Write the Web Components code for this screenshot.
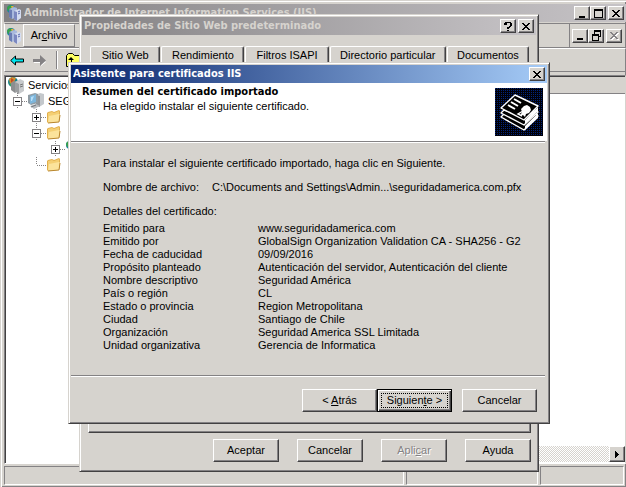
<!DOCTYPE html>
<html lang="es">
<head>
<meta charset="utf-8">
<title>Administrador de Internet Information Services (IIS)</title>
<style>
html, body { height: 100%; margin: 0; }
body {
  --face: #d6d3ce; --dark: #848284; --black: #424142; --light: #fff;
  font: 11px/13px "Liberation Sans", Arial, sans-serif;
  color: #000; position: relative; overflow: hidden; background: #d6d3ce;
}
</style>
</head>
<body>
<mmc-window></mmc-window>
<properties-dialog></properties-dialog>
<wizard-dialog></wizard-dialog>

<script>
const define = (name, html) => {
  const t = document.createElement('template');
  t.innerHTML = html;
  customElements.define(name, class extends HTMLElement {
    constructor() {
      super();
      this.attachShadow({ mode: 'open' }).append(t.content.cloneNode(true));
    }
  });
};

/* Raised outer frame of a window or dialog */
define('win-frame', `
<style>
:host { display: flex; flex-direction: column; min-width: 0; box-sizing: border-box; background: var(--face);
  border: 1px solid; border-color: var(--face) var(--black) var(--black) var(--face);
  box-shadow: inset 1px 1px var(--light), inset -1px -1px var(--dark); padding: 2px; }
</style><slot></slot>`);

define('title-bar', `
<style>
:host { display: flex; align-items: center; height: 18px; flex: none; gap: 2px; padding: 0 2px;
  background: linear-gradient(90deg, #848284, #c6c3c6); color: #d6d3ce; box-sizing: border-box; }
:host([active]) { background: linear-gradient(90deg, #08246b, #a5cbf7); color: #fff; }
h1 { flex: 1; margin: 0; font: bold 11px/16px "DejaVu Sans Condensed", Tahoma, sans-serif; white-space: nowrap; overflow: hidden; }
.tools { display: flex; }
</style>
<slot name="icon"></slot><h1><slot></slot></h1><div class="tools"><slot name="tools"></slot></div>`);

/* Small caption buttons: kind = min | max | restore | help | close */
const glyphs = {
  min: '<path d="M3 8h6v2H3z"/>',
  max: '<path d="M2 1h9v9H2zM3 3v6h7V3z" fill-rule="evenodd"/>',
  restore: '<path d="M4 0h7v7H9v4H2V4h2zM5 2v2h4v2h1V2zM3 6v4h5V6z" fill-rule="evenodd"/>',
  help: '<path d="M3 1h6v1H3zM2 2h3v2H2zM8 2h2v3H8zM7 5h2v1H7zM5 6h3v1H5zM5 7h2v1H5zM5 9h2v1H5z"/>',
  close: '<path d="M2 2h2v1h1v1h2V3h1V2h2v1H9v1H8v1H7v1h1v1h1v1h1v1H8V8H7V7H5v1H4v1H2V8h1V7h1V6h1V5H4V4H3V3H2z"/>'
};
customElements.define('caption-button', class extends HTMLElement {
  connectedCallback() {
    const off = this.hasAttribute('disabled');
    const g = glyphs[this.getAttribute('kind')];
    this.attachShadow({ mode: 'open' }).innerHTML = `
<style>
:host { display: block; }
button { display: block; width: 16px; height: 14px; padding: 0 0 0 1px; background: var(--face); border: 1px solid;
  border-color: var(--light) var(--black) var(--black) var(--light); box-shadow: inset -1px -1px var(--dark); }
svg { display: block; overflow: visible; }
</style>
<button type="button" aria-label="${this.getAttribute('label')}" ${off ? 'disabled' : ''}>
<svg width="12" height="11" viewBox="0 0 12 11" shape-rendering="crispEdges">${off ? `<g fill="#fff" transform="translate(1 1)">${g}</g><g fill="#848284">${g}</g>` : g}</svg></button>`;
  }
});

define('push-button', `
<style>
:host { display: block; width: 66px; }
button { display: block; width: 100%; height: 23px; padding: 0 0 1px; font: inherit; color: #000; background: var(--face); border: 1px solid;
  border-color: var(--light) var(--black) var(--black) var(--light); box-shadow: inset -1px -1px var(--dark); }
:host([default]) button { border: 1px solid #000; padding: 2px 3px 3px;
  box-shadow: inset 1px 1px var(--light), inset -1px -1px var(--black), inset -2px -2px var(--dark); }
:host([default]) span { display: block; border: 1px dotted #000; line-height: 13px; }
:host([disabled]) button { color: #848284; text-shadow: 1px 1px #fff; }
</style><button type="button"><span><slot></slot></span></button>`);

/* Server computer with a globe behind it */
define('server-icon', `
<style>:host { display: block; flex: none; width: 16px; height: 16px; } svg { display: block; }</style>
<svg width="16" height="16" viewBox="0 0 16 16">
<circle cx="5" cy="4" r="4" fill="#1c7fa8"/><path d="M2 1l3-1 2 2-2 3-3 1-1-3z" fill="#38a04a"/><path d="M5 1l3 0-2 3z" fill="#e8b23c"/>
<path d="M3 4l5-2 3 1v9l-5 2-3-2z" fill="#a9b9dd"/><path d="M3 4l3 1v9l-3-2z" fill="#6a7cb4"/>
<path d="M8 6l5-2 2 1v8l-4 3-3-2z" fill="#d4dcf0"/><path d="M8 6l3 1v9l-3-2z" fill="#7c88c0"/><path d="M12 7l2-1M12 9l2-1" stroke="#5a6ab0"/>
</svg>`);

define('iis-icon', `
<style>:host { display: block; flex: none; width: 16px; height: 17px; } svg { display: block; }</style>
<svg width="16" height="17" viewBox="0 0 16 17">
<circle cx="5" cy="5" r="5" fill="#16828c"/><path d="M1 2l3-2 4 1-2 4-4 2z" fill="#d8902c"/><path d="M3 1l3 2-3 3z" fill="#c04a28"/><path d="M1 6l3 1-1 3z" fill="#3ca860"/>
<path d="M3 6l3-2 4 1v9l-3 2-4-3z" fill="#8c8e90"/>
<path d="M7 5l5-3 4 2v10l-5 3-4-3z" fill="#c8cacc"/><path d="M7 5l4 2v10l-4-3z" fill="#9c9ea0"/><path d="M12 8l3-1M12 10l3-1" stroke="#777"/>
</svg>`);

define('computer-icon', `
<style>:host { display: block; flex: none; width: 17px; height: 16px; } svg { display: block; }</style>
<svg width="17" height="16" viewBox="0 0 17 16">
<path d="M9 2l4-2 4 1v10l-5 3-3-2z" fill="#c4c8cc"/><path d="M9 2l4 1v11l-4-2z" fill="#909498"/>
<path d="M1 2l7-2 3 1v9l-7 2-3-2z" fill="#8f9ba3"/><path d="M3 3l6-2v8l-6 2z" fill="#7db6dc"/><path d="M4 4l3-1-2 5-1 0z" fill="#b6def8"/>
<path d="M3 13l6-2 4 2-6 3z" fill="#b8bcc0"/><path d="M4 14l5-2" stroke="#71767c"/>
</svg>`);

define('folder-icon', `
<style>:host { display: block; flex: none; width: 15px; height: 14px; } svg { display: block; }</style>
<svg width="15" height="14" viewBox="0 0 15 14">
<path d="M1 3l1-1 4-1 2 1 5-2 1 1v9l-2 2-10 1-1-1z" fill="#e2b04c"/>
<path d="M2 3l4-1 2 1 5-2v8l-11 3z" fill="#f4cf73"/><path d="M3 6l10-2 1 1-1 7-11 1z" fill="#fbe39b"/><path d="M2 13l11-1 1-7" fill="none" stroke="#b98730"/>
</svg>`);

define('certificate-icon', `
<style>:host { display: block; flex: none; width: 48px; height: 48px; } svg { display: block; }</style>
<svg width="48" height="48" viewBox="0 0 48 48">
<defs><pattern id="p" width="2" height="2" patternUnits="userSpaceOnUse"><path d="M0 0h1v1H0z" fill="#00247b"/></pattern></defs>
<path d="M0 0h48v48H0z" fill="#000008"/><path d="M0 0h48v48H0z" fill="url(#p)" shape-rendering="crispEdges"/>
<g fill="#000" stroke="#fff" stroke-width="1.4" stroke-linejoin="round">
<path d="M6 29l3-3 21 8 11-8 2 2-14 14z"/><path d="M6 25l3-3 21 8 11-8 2 2-14 13z"/>
<path d="M20 7L43 18 29 32 6 20z"/></g>
<path d="M43 19v4L30 36v-4zM43 25v5L30 42v-4z" fill="#fff"/>
<path d="M19 11l7 4M16 14l7 4M13 17l7 4" stroke="#fff" stroke-width="2"/>
<path d="M29 18l3-1 3 2 1 3-2 3-3 1-1 3-2-2-3 1 2-4-1-3z" fill="#fff"/>
<path d="M27 28l-4-2 5-3" fill="none" stroke="#fff" stroke-width="1.4"/>
</svg>`);

/* One row of the console tree; --indent is the space before its expander */
customElements.define('tree-row', class extends HTMLElement {
  connectedCallback() {
    const s = this.getAttribute('state');
    this.attachShadow({ mode: 'open' }).innerHTML = `
<style>
:host { display: flex; align-items: center; height: 16px; gap: 4px; white-space: nowrap; padding-left: var(--indent, 2px); }
.node { width: 14px; height: 16px; margin-right: -4px; }
.node svg { display: block; }
</style>
${s ? `<span class="node"><svg width="14" height="16" shape-rendering="crispEdges">
<path d="M4.500 0v${s === 'leaf' ? 8 : 16}" stroke="#848284" stroke-dasharray="1 1"/><path d="M5 8.500h9" stroke="#848284" stroke-dasharray="1 1"/>
${s === 'leaf' ? '' : `<path d="M.5 4.500h8v8h-8z" fill="#fff" stroke="#848284"/><path d="M2 8h5v1H2z${s === 'plus' ? 'M4 6h1v5H4z' : ''}"/>`}
</svg></span>` : ''}<slot name="icon"></slot><slot></slot>`;
  }
});

define('mmc-window', `
<style>
:host { display: block; height: 100%; }
win-frame { height: 100%; padding: 3px 0 2px 3px; border-width: 1px 0 0 1px; }
.bar { display: flex; align-items: center; box-sizing: border-box; flex: none; background: var(--face);
  border: 1px solid; border-color: var(--light) var(--dark) var(--dark) var(--light); }
.menu { height: 25px; margin-top: 1px; border-top-color: var(--dark); }
.menu server-icon { margin: 0 1px; }
.menu button { align-self: stretch; width: 52px; padding: 0; border: 1px solid; font: inherit; background: var(--face);
  border-color: var(--light) var(--dark) var(--dark) var(--light); }
.grow { flex: 1; }
.mdi { display: flex; align-self: stretch; align-items: center; padding: 0 3px 0 2px; border-left: 1px solid var(--dark); }
.mdi caption-button:last-child { margin-left: 2px; }
.tools { height: 24px; gap: 9px; padding-left: 5px; }
.tools button { display: block; border: 0; padding: 0; background: none; }
.tools svg { display: block; }
.sep { width: 1px; height: 18px; background: var(--dark); box-shadow: 1px 0 var(--light); }
.panes { flex: 1; display: flex; min-height: 0; margin-top: 3px; gap: 3px; }
.pane { background: #fff; border: 1px solid; border-color: var(--dark) var(--face) var(--light) var(--dark);
  box-shadow: inset 1px 1px var(--black); box-sizing: border-box; padding: 1px; min-width: 0; overflow: hidden; }
.tree { width: 180px; flex: none; }
.list { flex: 1; display: flex; flex-direction: column; padding: 1px 0 1px 1px; }
.head { height: 16px; background: var(--face); border-bottom: 1px solid var(--dark); }
.scroll { display: flex; justify-content: flex-end; margin-top: auto; height: 16px;
  background: repeating-conic-gradient(#fff 0 25%, var(--face) 0 50%) 0 0 / 2px 2px; }
.scroll button { width: 16px; height: 16px; padding: 0; background: var(--face); border: 1px solid;
  border-color: var(--light) var(--black) var(--black) var(--light); box-shadow: inset -1px -1px var(--dark); }
.scroll svg { display: block; margin: auto; }
.status { display: flex; gap: 2px; height: 19px; flex: none; margin: 2px 2px 0 0; }
.status div { box-sizing: border-box; border: 1px solid; border-color: var(--dark) var(--light) var(--light) var(--dark); }
.status div:nth-child(1) { flex: 402; } .status div:nth-child(2) { flex: 131; } .status div:nth-child(3) { flex: 83; }
.l1 { --indent: 7px; } .l2 { --indent: 26px; } .l3 { --indent: 45px; }
</style>
<win-frame>
  <title-bar><server-icon slot="icon"></server-icon>Administrador de Internet Information Services (IIS)
    <caption-button slot="tools" kind="min" label="Minimizar"></caption-button>
    <caption-button slot="tools" kind="max" label="Maximizar"></caption-button>
    <caption-button slot="tools" kind="close" label="Cerrar" style="margin-left:2px"></caption-button>
  </title-bar>
  <div class="bar menu"><server-icon></server-icon><button type="button">Ar<u>c</u>hivo</button><span class="grow"></span>
    <div class="mdi"><caption-button kind="min" label="Minimizar ventana"></caption-button><caption-button kind="restore" label="Restaurar ventana"></caption-button><caption-button kind="close" label="Cerrar ventana" disabled></caption-button></div>
  </div>
  <div class="bar tools">
    <button type="button" aria-label="Atrás"><svg width="14" height="11"><path d="M.7 5.500L5.500 1v3h8v3h-8v3z" fill="#00e8f0" stroke="#000"/></svg></button>
    <button type="button" aria-label="Adelante"><svg width="14" height="11"><path d="M1 5h7V2l5 5-5 4V8H1z" fill="#fff"/><path d="M0 4h7V0l6 5.500L7 11V7H0z" fill="#848284"/></svg></button>
    <span class="sep"></span>
    <button type="button" aria-label="Subir un nivel"><svg width="16" height="14"><path d="M.5 13.500v-11l2-2h4l2 2h7v11z" fill="#ffff63" stroke="#000"/><path d="M5 4l3 3H6v3h5v1H5V7H2z"/></svg></button>
  </div>
  <div class="panes">
    <div class="pane tree" role="tree">
      <tree-row><iis-icon slot="icon"></iis-icon>Servicios</tree-row>
      <tree-row class="l1" state="minus"><computer-icon slot="icon"></computer-icon>SEG</tree-row>
      <tree-row class="l2" state="plus"><folder-icon slot="icon"></folder-icon></tree-row>
      <tree-row class="l2" state="minus"><folder-icon slot="icon"></folder-icon></tree-row>
      <tree-row class="l3" state="plus"><server-icon slot="icon"></server-icon></tree-row>
      <tree-row class="l2" state="leaf"><folder-icon slot="icon"></folder-icon></tree-row>
    </div>
    <div class="pane list"><div class="head"></div>
      <div class="scroll"><button type="button" aria-label="Desplazar a la derecha"><svg width="4" height="7" shape-rendering="crispEdges"><path d="M0 0h1v1h1v1h1v1h1v1H3v1H2v1H1v1H0z"/></svg></button></div>
    </div>
  </div>
  <div class="status"><div></div><div></div><div></div></div>
</win-frame>`);

define('properties-dialog', `
<style>
:host { position: absolute; left: 79px; top: 14px; right: 87px; }
.body { display: flex; flex-direction: column; padding: 11px 5px 7px 6px; }
.tabs { display: flex; gap: 1px; padding: 0 2px; }
.tabs button { height: 18px; padding: 0; font: inherit; background: var(--face); border: 1px solid; border-bottom: 0;
  border-color: var(--light) var(--black) var(--light) var(--light); border-radius: 2px 2px 0 0; box-shadow: inset -1px 0 var(--dark); }
.tabs button:nth-child(1) { flex: 70 0 0; } .tabs button:nth-child(2) { flex: 83 0 0; } .tabs button:nth-child(3) { flex: 83 0 0; }
.tabs button:nth-child(4) { flex: 117 0 0; } .tabs button:nth-child(5) { flex: 82 0 0; }
.page { height: 369px; border: 1px solid; border-color: var(--light) var(--black) var(--black) var(--light); box-shadow: inset -1px -1px var(--dark); box-sizing: border-box; }
.buttons { display: flex; justify-content: flex-end; gap: 18px; margin-top: 6px; }
</style>
<win-frame>
  <title-bar>Propiedades de Sitio Web predeterminado
    <caption-button slot="tools" kind="help" label="Ayuda"></caption-button>
    <caption-button slot="tools" kind="close" label="Cerrar" style="margin-left:2px"></caption-button>
  </title-bar>
  <div class="body">
    <div class="tabs" role="tablist"><button role="tab">Sitio Web</button><button role="tab">Rendimiento</button><button role="tab">Filtros ISAPI</button><button role="tab">Directorio particular</button><button role="tab">Documentos</button></div>
    <div class="page"></div>
    <div class="buttons"><push-button>Aceptar</push-button><push-button>Cancelar</push-button><push-button disabled>Apli<u>c</u>ar</push-button><push-button>Ayuda</push-button></div>
  </div>
</win-frame>`);

define('wizard-dialog', `
<style>
:host { position: absolute; left: 68px; top: 62px; right: 76px; }
header { display: flex; justify-content: space-between; align-items: flex-start; background: #fff; height: 58px; box-sizing: border-box; padding: 1px 4px 0 11px; }
h2 { margin: 0; font: bold 11px/15px "DejaVu Sans Condensed", Tahoma, sans-serif; }
header p { margin: 0 0 0 21px; line-height: 15px; }
certificate-icon { margin-top: 4px; }
hr { margin: 0 2px 0 0; border: 0; height: 1px; background: var(--dark); box-shadow: 0 1px #fff; }
section { padding: 15px 16px 23px 32px; white-space: nowrap; }
section p { margin: 0; line-height: 13px; }
.file { display: grid; grid-template-columns: 109px 1fr; margin: 11px 0; }
table { border-collapse: collapse; margin-top: 4px; width: 100%; }
th, td { padding: 0; font-weight: normal; text-align: left; height: 13px; line-height: 13px; }
th { width: 155px; }
footer { display: flex; justify-content: flex-end; padding: 13px 10px 9px; }
footer push-button { width: 75px; }
footer push-button:last-child { margin-left: 10px; }
</style>
<win-frame>
  <title-bar active>Asistente para certificados IIS<caption-button slot="tools" kind="close" label="Cerrar"></caption-button></title-bar>
  <header><div><h2>Resumen del certificado importado</h2><p>Ha elegido instalar el siguiente certificado.</p></div><certificate-icon></certificate-icon></header>
  <hr>
  <section>
    <p>Para instalar el siguiente certificado importado, haga clic en Siguiente.</p>
    <p class="file"><span>Nombre de archivo:</span><span>C:\\Documents and Settings\\Admin...\\seguridadamerica.com.pfx</span></p>
    <p>Detalles del certificado:</p>
    <table>
      <tr><th scope="row">Emitido para</th><td>www.seguridadamerica.com</td></tr>
      <tr><th scope="row">Emitido por</th><td>GlobalSign Organization Validation CA - SHA256 - G2</td></tr>
      <tr><th scope="row">Fecha de caducidad</th><td>09/09/2016</td></tr>
      <tr><th scope="row">Propósito planteado</th><td>Autenticación del servidor, Autenticación del cliente</td></tr>
      <tr><th scope="row">Nombre descriptivo</th><td>Seguridad América</td></tr>
      <tr><th scope="row">País o región</th><td>CL</td></tr>
      <tr><th scope="row">Estado o provincia</th><td>Region Metropolitana</td></tr>
      <tr><th scope="row">Ciudad</th><td>Santiago de Chile</td></tr>
      <tr><th scope="row">Organización</th><td>Seguridad America SSL Limitada</td></tr>
      <tr><th scope="row">Unidad organizativa</th><td>Gerencia de Informatica</td></tr>
    </table>
  </section>
  <hr>
  <footer><push-button>&lt; <u>A</u>trás</push-button><push-button default>Siguien<u>t</u>e &gt;</push-button><push-button>Cancelar</push-button></footer>
</win-frame>`);
</script>
</body>
</html>
